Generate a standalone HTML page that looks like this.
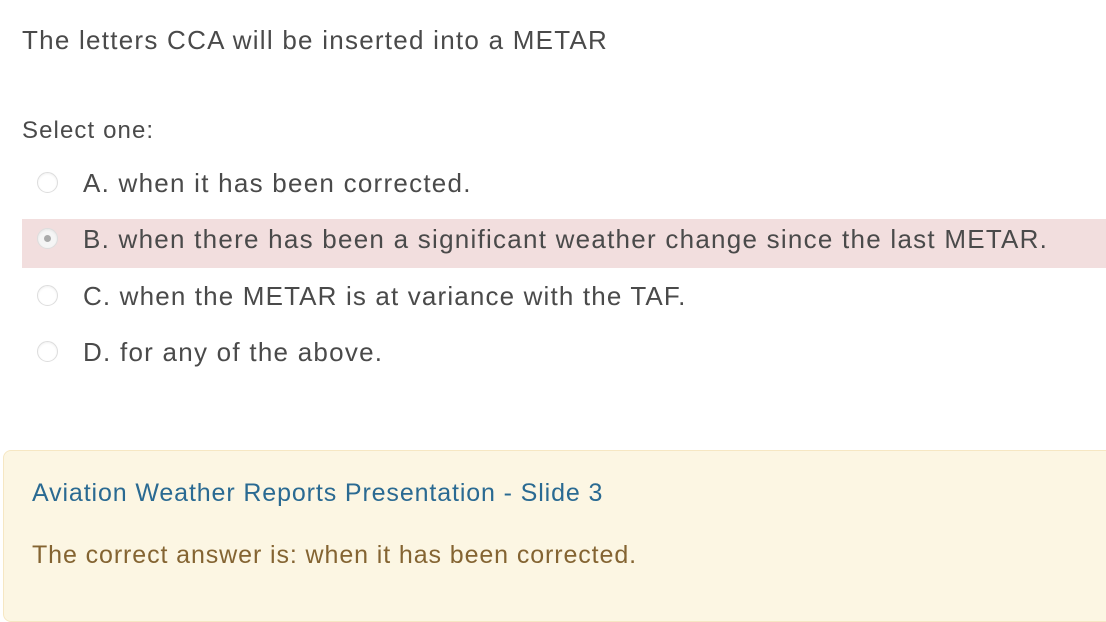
<!DOCTYPE html>
<html><head><style>
body{margin:0;width:1106px;height:604px;background:#fff;font-family:"Liberation Sans",sans-serif;color:#4a4a4a;position:relative;overflow:hidden}
.t{position:absolute;white-space:nowrap;font-size:26px;line-height:30px;letter-spacing:1.25px}
.r{position:absolute;left:37px;width:21px;height:21px;border-radius:50%;border:1px solid #ddd;background:#fff;box-sizing:border-box;box-shadow:inset 0 1px 2px rgba(0,0,0,.06)}
.hl{position:absolute;left:22px;top:219px;width:1084px;height:49px;background:#f2dede}
.box{position:absolute;left:3px;top:450px;width:1110px;height:170px;background:#fcf6e3;border:1px solid #f6e7c3;border-radius:8px}
</style></head><body>
<div class="t" style="left:22px;top:25px">The letters CCA will be inserted into a METAR</div>
<div class="t" style="left:22px;top:116px;font-size:24px;letter-spacing:1.1px">Select one:</div>
<div class="hl"></div>
<div class="r" style="top:172px"></div>
<div class="t" style="left:83px;top:168px">A. when it has been corrected.</div>
<div class="r" style="top:228px;background:#f5f5f5"><div style="position:absolute;left:6px;top:6px;width:7px;height:7px;border-radius:50%;background:#aaa"></div></div>
<div class="t" style="left:83px;top:224px">B. when there has been a significant weather change since the last METAR.</div>
<div class="r" style="top:285px"></div>
<div class="t" style="left:83px;top:281px;letter-spacing:1.15px">C. when the METAR is at variance with the TAF.</div>
<div class="r" style="top:341px"></div>
<div class="t" style="left:83px;top:337px">D. for any of the above.</div>
<div class="box"></div>
<div class="t" style="left:32px;top:478px;color:#2a6a92;font-size:25px;letter-spacing:0.88px">Aviation Weather Reports Presentation - Slide 3</div>
<div class="t" style="left:32px;top:540px;color:#846432;font-size:25px;letter-spacing:0.9px">The correct answer is: when it has been corrected.</div>
</body></html>
